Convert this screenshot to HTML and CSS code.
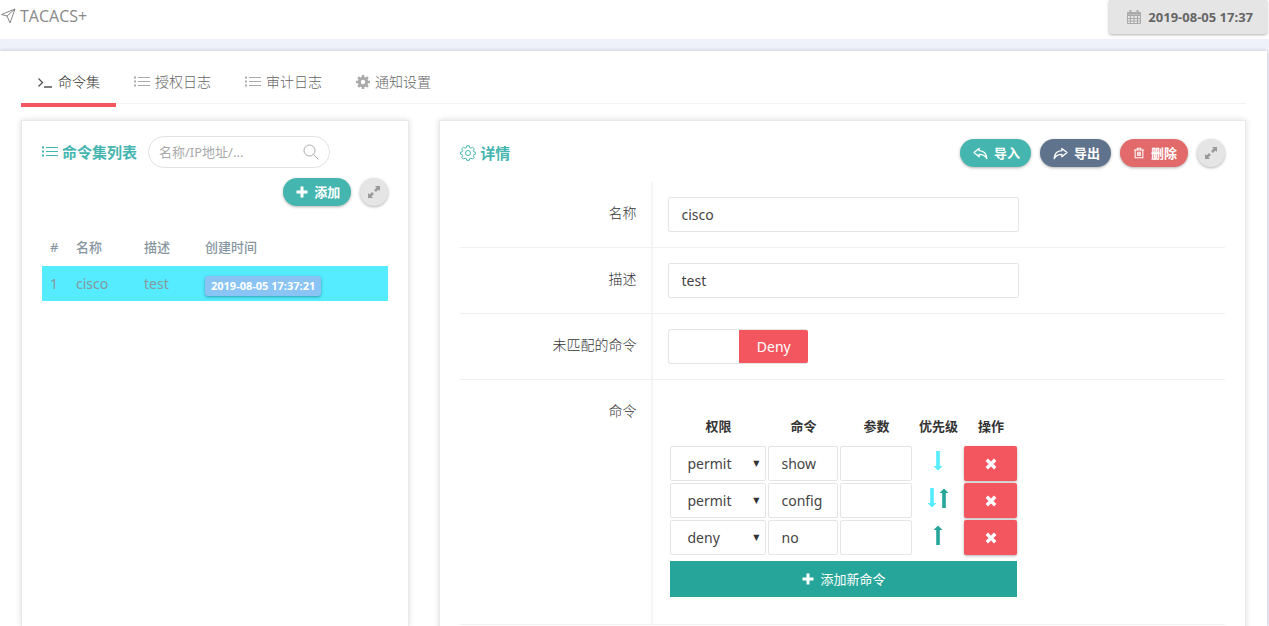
FILE: index.html
```html
<!DOCTYPE html>
<html lang="zh-CN">
<head>
<meta charset="utf-8">
<title>TACACS+</title>
<link rel="stylesheet" href="styles.css">
</head>
<body>
<svg class="defs" aria-hidden="true">
  <symbol id="i-list" viewBox="0 0 16 12"><path d="M0 1.500h2M0 5.500h2M0 9.500h2" stroke="currentColor" stroke-width="2"/><path d="M4 1.500h12M4 5.500h12M4 9.500h12" stroke="currentColor" stroke-width="1"/></symbol>
  <symbol id="i-expand" viewBox="0 0 14 14"><path d="M8 1h5v5l-1.600-1.600-2.500 2.500-1.800-1.800 2.500-2.500zM6 13H1V8l1.600 1.600 2.500-2.500 1.800 1.800-2.500 2.500z" fill="currentColor"/></symbol>
  <symbol id="i-plus" viewBox="0 0 12 12"><path d="M4.500 0.500h3v4h4v3h-4v4h-3v-4h-4v-3h4z" fill="currentColor"/></symbol>
  <symbol id="i-times" viewBox="0 0 12 12"><path d="M3 3l6 6M9 3l-6 6" stroke="currentColor" stroke-width="3.400" stroke-linecap="square"/></symbol>
  <symbol id="i-down" viewBox="0 0 10 20"><path d="M3.200 0h3.600v15H9.500L5 19.500.5 15h2.700z" fill="currentColor"/></symbol>
  <symbol id="i-up" viewBox="0 0 10 20"><path d="M3.200 20h3.600V5H9.500L5 .5.5 5h2.700z" fill="currentColor"/></symbol>
  <symbol id="i-reply" viewBox="0 0 16 14"><path d="M6.500 1.500L1 6l5.500 4.500V8c4 0 6.500.8 8.300 4.500C14.500 7.500 12 4.300 6.500 4z" fill="none" stroke="currentColor" stroke-width="1.400" stroke-linejoin="round"/></symbol>
</svg>

<header class="topbar">
  <h1 class="brand">
    <svg class="icon-16" viewBox="0 0 16 16" fill="none" stroke="currentColor" stroke-linejoin="round"><path d="M15 1L1.500 6.500l5.500 1.500 3 7z"/><path d="M15 1L7 8"/></svg>
    TACACS+
  </h1>
  <div class="clock">
    <svg class="icon-16" viewBox="0 0 16 16" fill="none" stroke="currentColor"><path d="M1.500 3.500h13v11h-13zM1.500 6.500h13M1.500 9.500h13M1.500 12h13M4.500 6.500v8M8 6.500v8M11.500 6.500v8"/><path d="M1.500 4.700h13" stroke-width="2"/><path d="M4.500 1v3M11.500 1v3" stroke-width="2"/></svg>
    <time datetime="2019-08-05T17:37">2019-08-05 17:37</time>
  </div>
</header>

<main class="page">
  <nav class="tabs">
    <a class="tab active" href="#sets"><svg class="icon-16" viewBox="0 0 16 14" fill="none" stroke="currentColor" stroke-width="1.300"><path d="M1.500 3.500L5.500 7.500l-4 4M7 12h8"/></svg>命令集</a>
    <a class="tab" href="#auth"><svg class="icon-list"><use href="#i-list"/></svg>授权日志</a>
    <a class="tab" href="#audit"><svg class="icon-list"><use href="#i-list"/></svg>审计日志</a>
    <a class="tab" href="#notify"><svg class="icon-14" viewBox="0 0 14 14"><circle cx="7" cy="7" r="3.700" fill="none" stroke="currentColor" stroke-width="3"/><path d="M7 0v2.500M7 11.500V14M0 7h2.500M11.500 7H14M2.100 2.100l1.800 1.800M10.100 10.100l1.800 1.800M2.100 11.900l1.800-1.800M10.100 3.900l1.800-1.800" stroke="currentColor" stroke-width="2.600"/></svg>通知设置</a>
  </nav>

  <div class="columns">
    <section class="panel sets" id="sets">
      <div class="sets-head">
        <h2 class="panel-title"><svg class="icon-list"><use href="#i-list"/></svg>命令集列表</h2>
        <label class="search">
          <input type="text" placeholder="名称/IP地址/..." aria-label="搜索">
          <svg class="icon-16" viewBox="0 0 16 16" fill="none" stroke="currentColor"><circle cx="6.500" cy="6.500" r="5.500"/><path d="M10.500 10.500l5 5"/></svg>
        </label>
      </div>
      <div class="actions">
        <button class="btn teal" type="button"><svg class="icon-12"><use href="#i-plus"/></svg>添加</button>
        <button class="btn round" type="button" aria-label="全屏"><svg class="icon-14"><use href="#i-expand"/></svg></button>
      </div>
      <table class="set-table">
        <thead><tr><th>#</th><th>名称</th><th>描述</th><th>创建时间</th></tr></thead>
        <tbody><tr><td>1</td><td>cisco</td><td>test</td><td><span class="stamp">2019-08-05 17:37:21</span></td></tr></tbody>
      </table>
    </section>

    <section class="panel detail">
      <div class="detail-head">
        <h2 class="panel-title"><svg class="icon-16" viewBox="0 0 16 16" fill="none" stroke="currentColor" stroke-linejoin="round"><circle cx="8" cy="8" r="2.500"/><path d="M6.700.8h2.600l.4 1.900 1.200.5 1.700-1 1.700 1.700-1 1.700.5 1.200 1.900.4v1.900l-1.900.4-.5 1.200 1 1.700-1.700 1.700-1.700-1-1.200.5-.4 1.700H6.700l-.4-1.700-1.200-.5-1.700 1-1.700-1.700 1-1.700-.5-1.200-1.700-.4V7.200l1.700-.4.5-1.200-1-1.700 1.700-1.700 1.700 1 1.200-.5z"/></svg>详情</h2>
        <div class="actions">
          <button class="btn teal" type="button"><svg class="icon-reply"><use href="#i-reply"/></svg>导入</button>
          <button class="btn slate" type="button"><svg class="icon-reply flip"><use href="#i-reply"/></svg>导出</button>
          <button class="btn red" type="button"><svg class="icon-12" viewBox="0 0 12 14" fill="none" stroke="currentColor" stroke-width="1.200"><path d="M0 3.500h12M4 3V1.500h4V3M1.500 3.500v9h9v-9M4.500 5.500v5M6 5.500v5M7.500 5.500v5"/></svg>删除</button>
          <button class="btn round" type="button" aria-label="全屏"><svg class="icon-14"><use href="#i-expand"/></svg></button>
        </div>
      </div>

      <form class="form">
        <div class="row">
          <label class="label" for="name">名称</label>
          <div class="value"><input class="field" id="name" type="text" value="cisco"></div>
        </div>
        <div class="row">
          <label class="label" for="desc">描述</label>
          <div class="value"><input class="field" id="desc" type="text" value="test"></div>
        </div>
        <div class="row">
          <span class="label" id="unmatched">未匹配的命令</span>
          <div class="value"><button class="switch" type="button" role="switch" aria-checked="false" aria-labelledby="unmatched"><span>Deny</span></button></div>
        </div>
        <div class="row">
          <span class="label">命令</span>
          <div class="value">
            <table class="cmds">
              <thead><tr><th class="c-perm">权限</th><th class="c-cmd">命令</th><th class="c-arg">参数</th><th class="c-order">优先级</th><th class="c-op">操作</th></tr></thead>
              <tbody>
                <tr>
                  <td><div class="pick"><select aria-label="权限"><option>permit</option><option>deny</option></select><i>▼</i></div></td>
                  <td><input class="field" type="text" value="show" aria-label="命令"></td>
                  <td><input class="field" type="text" aria-label="参数"></td>
                  <td class="order"><button class="move down" type="button" aria-label="下移"><svg><use href="#i-down"/></svg></button></td>
                  <td><button class="remove" type="button" aria-label="删除"><svg class="icon-12"><use href="#i-times"/></svg></button></td>
                </tr>
                <tr>
                  <td><div class="pick"><select aria-label="权限"><option>permit</option><option>deny</option></select><i>▼</i></div></td>
                  <td><input class="field" type="text" value="config" aria-label="命令"></td>
                  <td><input class="field" type="text" aria-label="参数"></td>
                  <td class="order"><button class="move down" type="button" aria-label="下移"><svg><use href="#i-down"/></svg></button><button class="move up" type="button" aria-label="上移"><svg><use href="#i-up"/></svg></button></td>
                  <td><button class="remove" type="button" aria-label="删除"><svg class="icon-12"><use href="#i-times"/></svg></button></td>
                </tr>
                <tr>
                  <td><div class="pick"><select aria-label="权限"><option>permit</option><option selected>deny</option></select><i>▼</i></div></td>
                  <td><input class="field" type="text" value="no" aria-label="命令"></td>
                  <td><input class="field" type="text" aria-label="参数"></td>
                  <td class="order"><button class="move up" type="button" aria-label="上移"><svg><use href="#i-up"/></svg></button></td>
                  <td><button class="remove" type="button" aria-label="删除"><svg class="icon-12"><use href="#i-times"/></svg></button></td>
                </tr>
              </tbody>
            </table>
            <button class="add" type="button"><svg class="icon-12"><use href="#i-plus"/></svg>添加新命令</button>
          </div>
        </div>
      </form>
    </section>
  </div>
</main>
</body>
</html>
```

FILE: styles.css
```css
* { box-sizing: border-box; }
body {
  margin: 0;
  height: 100vh;
  display: flex;
  flex-direction: column;
  overflow: hidden;
  background: #eef1fa;
  color: #333;
  font: 14px/20px "Noto Sans", "Noto Sans CJK SC", sans-serif;
}
button, input, select { font: inherit; color: inherit; margin: 0; }
button { border: 0; padding: 0; cursor: pointer; }
h1, h2 { margin: 0; }
svg { display: block; flex: none; }
.defs { position: absolute; width: 0; height: 0; }
.icon-16 { width: 16px; height: 16px; }
.icon-14 { width: 14px; height: 14px; }
.icon-12 { width: 12px; height: 12px; }
.icon-list { width: 16px; height: 12px; }
.icon-reply { width: 15px; height: 13px; }
.flip { transform: scaleX(-1); }

.topbar {
  display: flex;
  justify-content: space-between;
  align-items: flex-start;
  height: 39px;
  flex: none;
  background: #fff;
  padding-right: 2px;
}
.brand {
  display: flex;
  align-items: center;
  gap: 4px;
  height: 32px;
  color: #888;
  font: 400 16px/20px "Open Sans", sans-serif;
}
.clock {
  display: flex;
  align-items: center;
  gap: 6px;
  height: 34px;
  padding: 0 14px 0 17px;
  background: #e5e5e5;
  color: #aaa;
  border-radius: 0 0 3px 3px;
  box-shadow: 0 1px 3px rgba(0, 0, 0, .3);
  font: 700 13px/20px "Open Sans", sans-serif;
}
.clock time { color: #666; }

.page {
  flex: 1;
  min-height: 0;
  display: flex;
  flex-direction: column;
  margin: 12px 2px 0 0;
  padding: 10px 21px 0;
  background: #fff;
  box-shadow: 0 0 4px rgba(0, 0, 0, .2);
}
.tabs {
  display: flex;
  gap: 2px;
  flex: none;
  border-bottom: 1px solid #f3f3f3;
  margin-bottom: 16px;
}
.tab {
  display: flex;
  align-items: center;
  gap: 5px;
  height: 46px;
  padding: 0 16px;
  margin-bottom: -4px;
  border-bottom: 4px solid transparent;
  color: #666;
  text-decoration: none;
  font-weight: 300;
}
.tab svg { color: #aaa; }
.tab.active { color: #333; border-color: #f4565f; }
.tab.active svg { color: #555; }

.columns { display: flex; gap: 30px; flex: 1; min-height: 0; }
.panel {
  background: #fff;
  border: 1px solid #e9e9e9;
  border-bottom: 0;
  box-shadow: 0 0 6px rgba(0, 0, 0, .14);
  padding: 15px 20px;
}
.sets { width: calc((100% + 30px) / 3 - 30px); }
.detail { flex: 1; height: max-content; min-width: 0; }
.panel-title {
  display: flex;
  align-items: center;
  gap: 4px;
  color: #45b6af;
  font-size: 15px;
  line-height: 20px;
  white-space: nowrap;
}
.sets-head { display: flex; align-items: center; gap: 11px; }
.search {
  display: flex;
  align-items: center;
  width: 182px;
  height: 32px;
  padding: 0 10px;
  border: 1px solid #e2e2e2;
  border-radius: 16px;
  color: #aaa;
}
.search input {
  flex: 1;
  min-width: 0;
  border: 0;
  padding: 0;
  outline: 0;
  background: none;
  font-size: 13px;
}
.search input::placeholder { color: #aaa; }

.actions { display: flex; justify-content: flex-end; gap: 9px; }
.sets .actions { margin-top: 10px; }
.btn {
  display: flex;
  align-items: center;
  justify-content: center;
  gap: 6px;
  height: 28px;
  padding: 0 11px 0 13px;
  border-radius: 14px;
  color: #fff;
  font-size: 13px;
  font-weight: 700;
  box-shadow: 0 1px 3px rgba(0, 0, 0, .3);
}
.teal { background: #45b6af; }
.slate { background: #5f738c; }
.red { background: #e26a6a; }
.round { width: 28px; padding: 0; background: #e5e5e5; color: #999; }

.set-table { width: 100%; margin-top: 25px; border-collapse: collapse; color: #8896a0; }
.set-table th, .set-table td { height: 35px; padding: 0 8px; text-align: left; }
.set-table th { padding-bottom: 4px; font-size: 13px; font-weight: 500; }
.set-table th:nth-child(1) { width: 26px; }
.set-table th:nth-child(2) { width: 68px; }
.set-table th:nth-child(3) { width: 61px; }
.set-table tr > :first-child { padding-right: 0; }
.set-table tbody { background: #55ecff; }
.stamp {
  display: block;
  width: max-content;
  margin-top: 4px;
  padding: 0 6px;
  border-radius: 3px;
  background: #89c4f4;
  color: #fff;
  font: 700 11px/20px "Open Sans", sans-serif;
  box-shadow: 0 1px 3px rgba(0, 0, 0, .35);
}

.detail-head { display: flex; justify-content: space-between; align-items: flex-start; padding: 3px 0 15px; }
.detail-head .panel-title { padding-top: 4px; }
.row { display: flex; border-bottom: 1px solid #f0f0f0; }
.label {
  width: 25%;
  padding: 21px 15px 0 0;
  text-align: right;
  font-weight: 300;
}
.value { flex: 1; padding: 15px; border-left: 2px solid #f5f5f5; }
.row:last-child .value { padding: 16px 15px 27px; }
.field {
  display: block;
  width: 351px;
  max-width: 100%;
  height: 35px;
  padding: 0 12px;
  border: 1px solid #e5e5e5;
  border-radius: 2px;
  background: #fff;
  color: #444;
}
.switch {
  display: flex;
  justify-content: flex-end;
  width: 140px;
  height: 35px;
  border: 1px solid #e5e5e5;
  border-right: 0;
  border-radius: 3px;
  background: #fff;
}
.switch span {
  width: 50%;
  background: #f4565f;
  color: #fff;
  line-height: 33px;
  border-radius: 0 2px 2px 0;
}

.cmds { width: 351px; table-layout: fixed; border-spacing: 2px; }
.cmds th { padding: 18px 0 8px; font-size: 13px; }
.cmds td { padding: 0; }
.c-perm { width: 96px; }
.c-cmd { width: 70px; }
.c-arg { width: 72px; }
.c-op { width: 53px; }
.cmds .field { width: 100%; }
.pick { display: grid; align-items: center; }
.pick select, .pick i { grid-area: 1 / 1; }
.pick select {
  appearance: none;
  width: 100%;
  height: 35px;
  padding: 0 16px;
  border: 1px solid #e5e5e5;
  border-radius: 2px;
  background: #fff;
  color: #444;
}
.pick i {
  justify-self: end;
  padding-right: 7px;
  pointer-events: none;
  font: 8px/12px "DejaVu Sans", sans-serif;
}
.order { text-align: center; }
.move { background: none; margin: 0 1px; }
.move svg { width: 10px; height: 20px; }
.down { color: #55ecff; }
.up { color: #26a69a; }
.remove {
  display: grid;
  place-items: center;
  width: 100%;
  height: 35px;
  border-radius: 2px;
  background: #f4565f;
  color: #fff;
  box-shadow: 0 1px 3px rgba(0, 0, 0, .3);
}
.add {
  display: flex;
  align-items: center;
  justify-content: center;
  gap: 6px;
  width: 347px;
  height: 36px;
  margin: 4px 2px 0;
  background: #26a69a;
  color: #fff;
  font-size: 13px;
}
```
